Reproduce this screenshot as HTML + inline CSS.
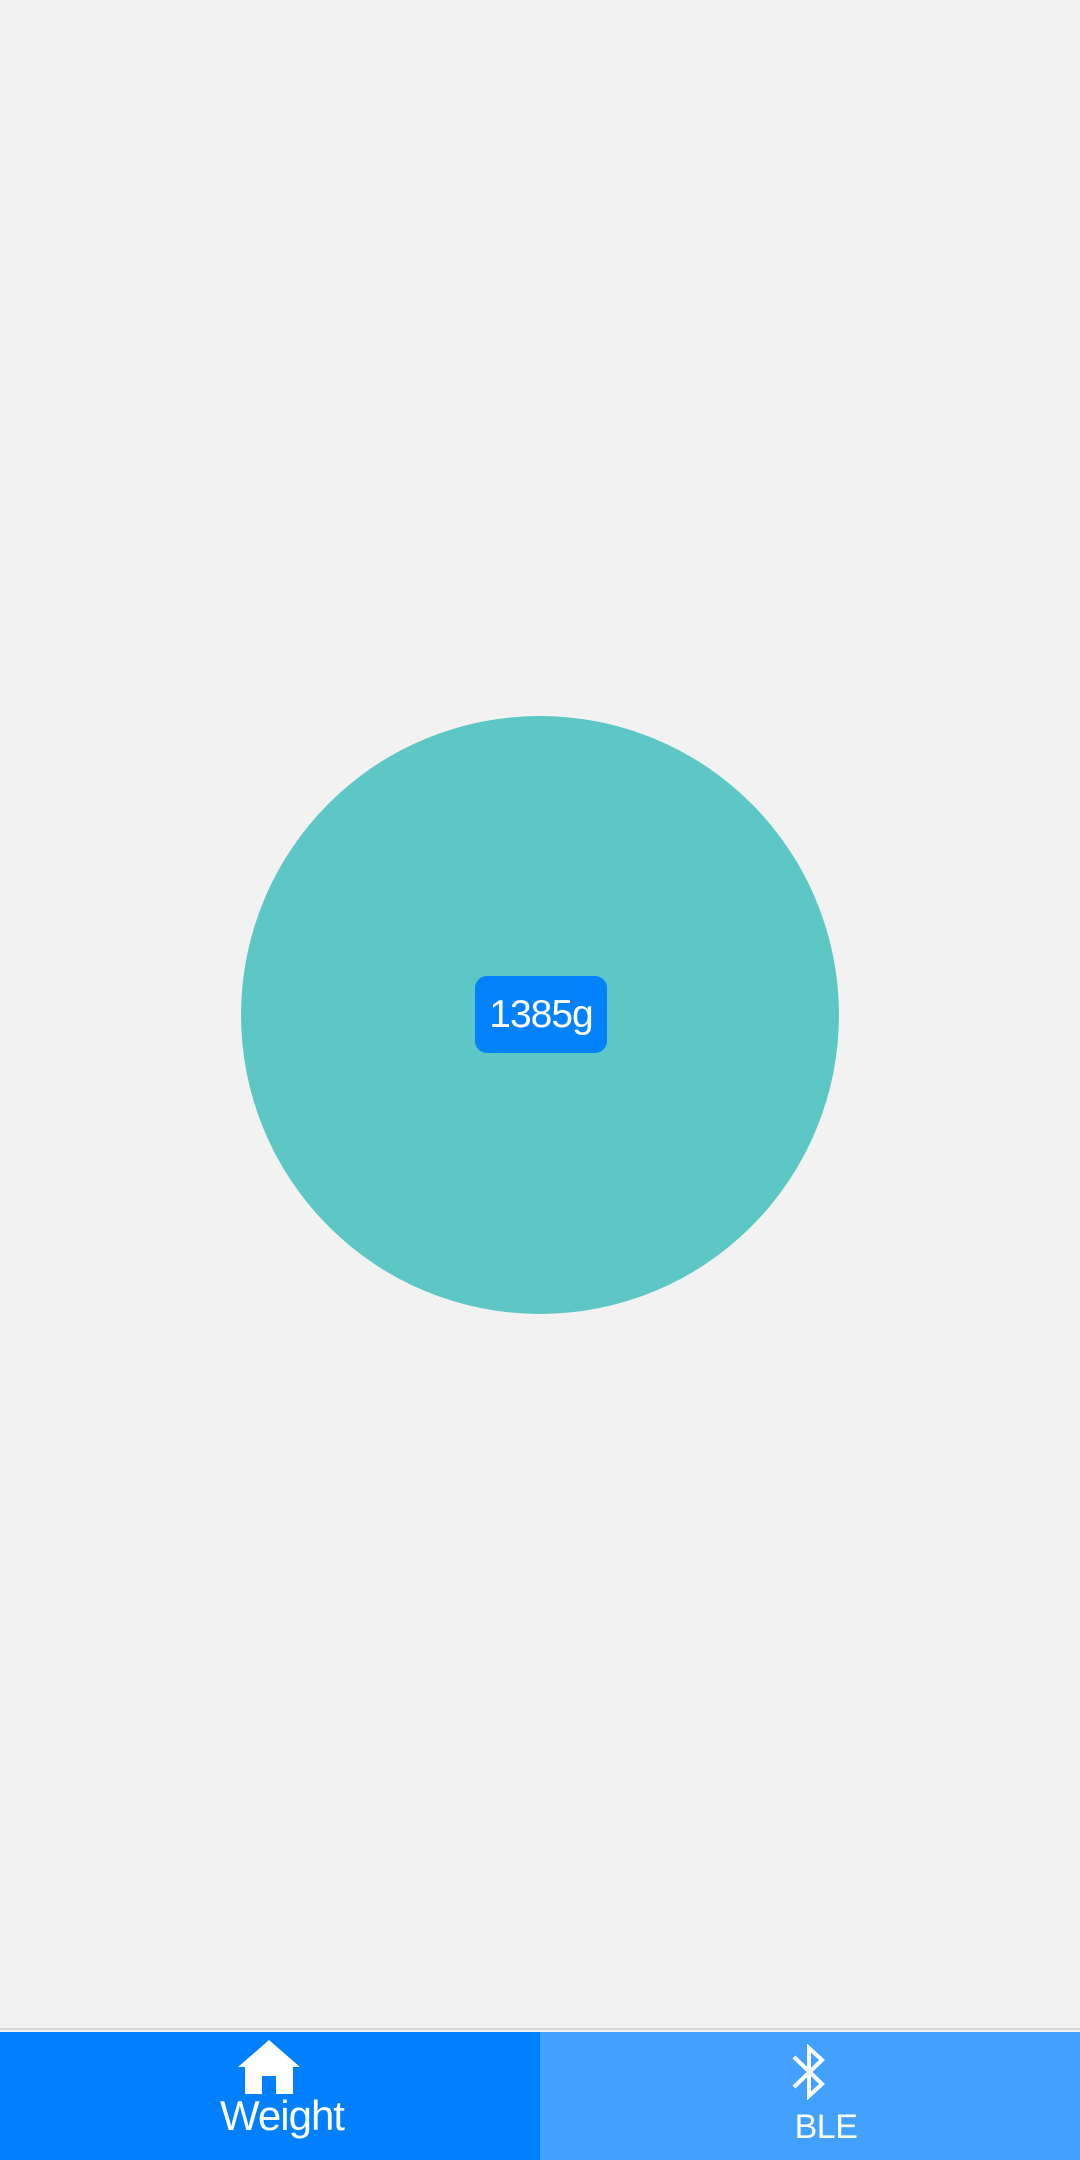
<!DOCTYPE html>
<html><head><meta charset="utf-8"><style>
html,body{margin:0;padding:0}
body{width:1080px;height:2158px;background:#f2f2f2;position:relative;overflow:hidden;font-family:"Liberation Sans",sans-serif}
.c{position:absolute;left:241px;top:716px;width:598px;height:598px;border-radius:50%;background:#5cc7c4}
.b{position:absolute;left:475px;top:976px;width:132px;height:77px;border-radius:12px;background:#0481fd;color:#fff;font-size:39px;line-height:77px;text-align:center;letter-spacing:-1px}
.bar{position:absolute;left:0;top:2028px;width:1080px;height:130px;border-top:2px solid #d8d8d8}
.l{position:absolute;left:0;top:2px;width:540px;height:128px;background:#0080ff}
.r{position:absolute;left:540px;top:2px;width:540px;height:128px;background:#42a0ff}
.t{position:absolute;color:#fff;width:100%;text-align:center}
</style></head><body>
<div class="c"></div>
<div class="b">1385g</div>
<div class="bar">
<div class="l">
<svg style="position:absolute;left:238px;top:8px" width="62" height="54" viewBox="0 0 62 54"><path d="M31 0 L62 27 L55 27 L55 54 L38 54 L38 36 L24 36 L24 54 L7 54 L7 27 L0 27 Z" fill="#fff"/></svg>
<div class="t" style="top:60px;font-size:42px;left:12px;letter-spacing:-1px">Weight</div>
</div>
<div class="r">
<svg style="position:absolute;left:251px;top:12px" width="36" height="56" viewBox="0 0 36 56"><path d="M3 13 L31 40 L18 52 L18 4 L31 16 L3 43" fill="none" stroke="#fff" stroke-width="4"/></svg>
<div class="t" style="top:76px;font-size:34px;left:16px;letter-spacing:-0.5px">BLE</div>
</div>
</div>
</body></html>
